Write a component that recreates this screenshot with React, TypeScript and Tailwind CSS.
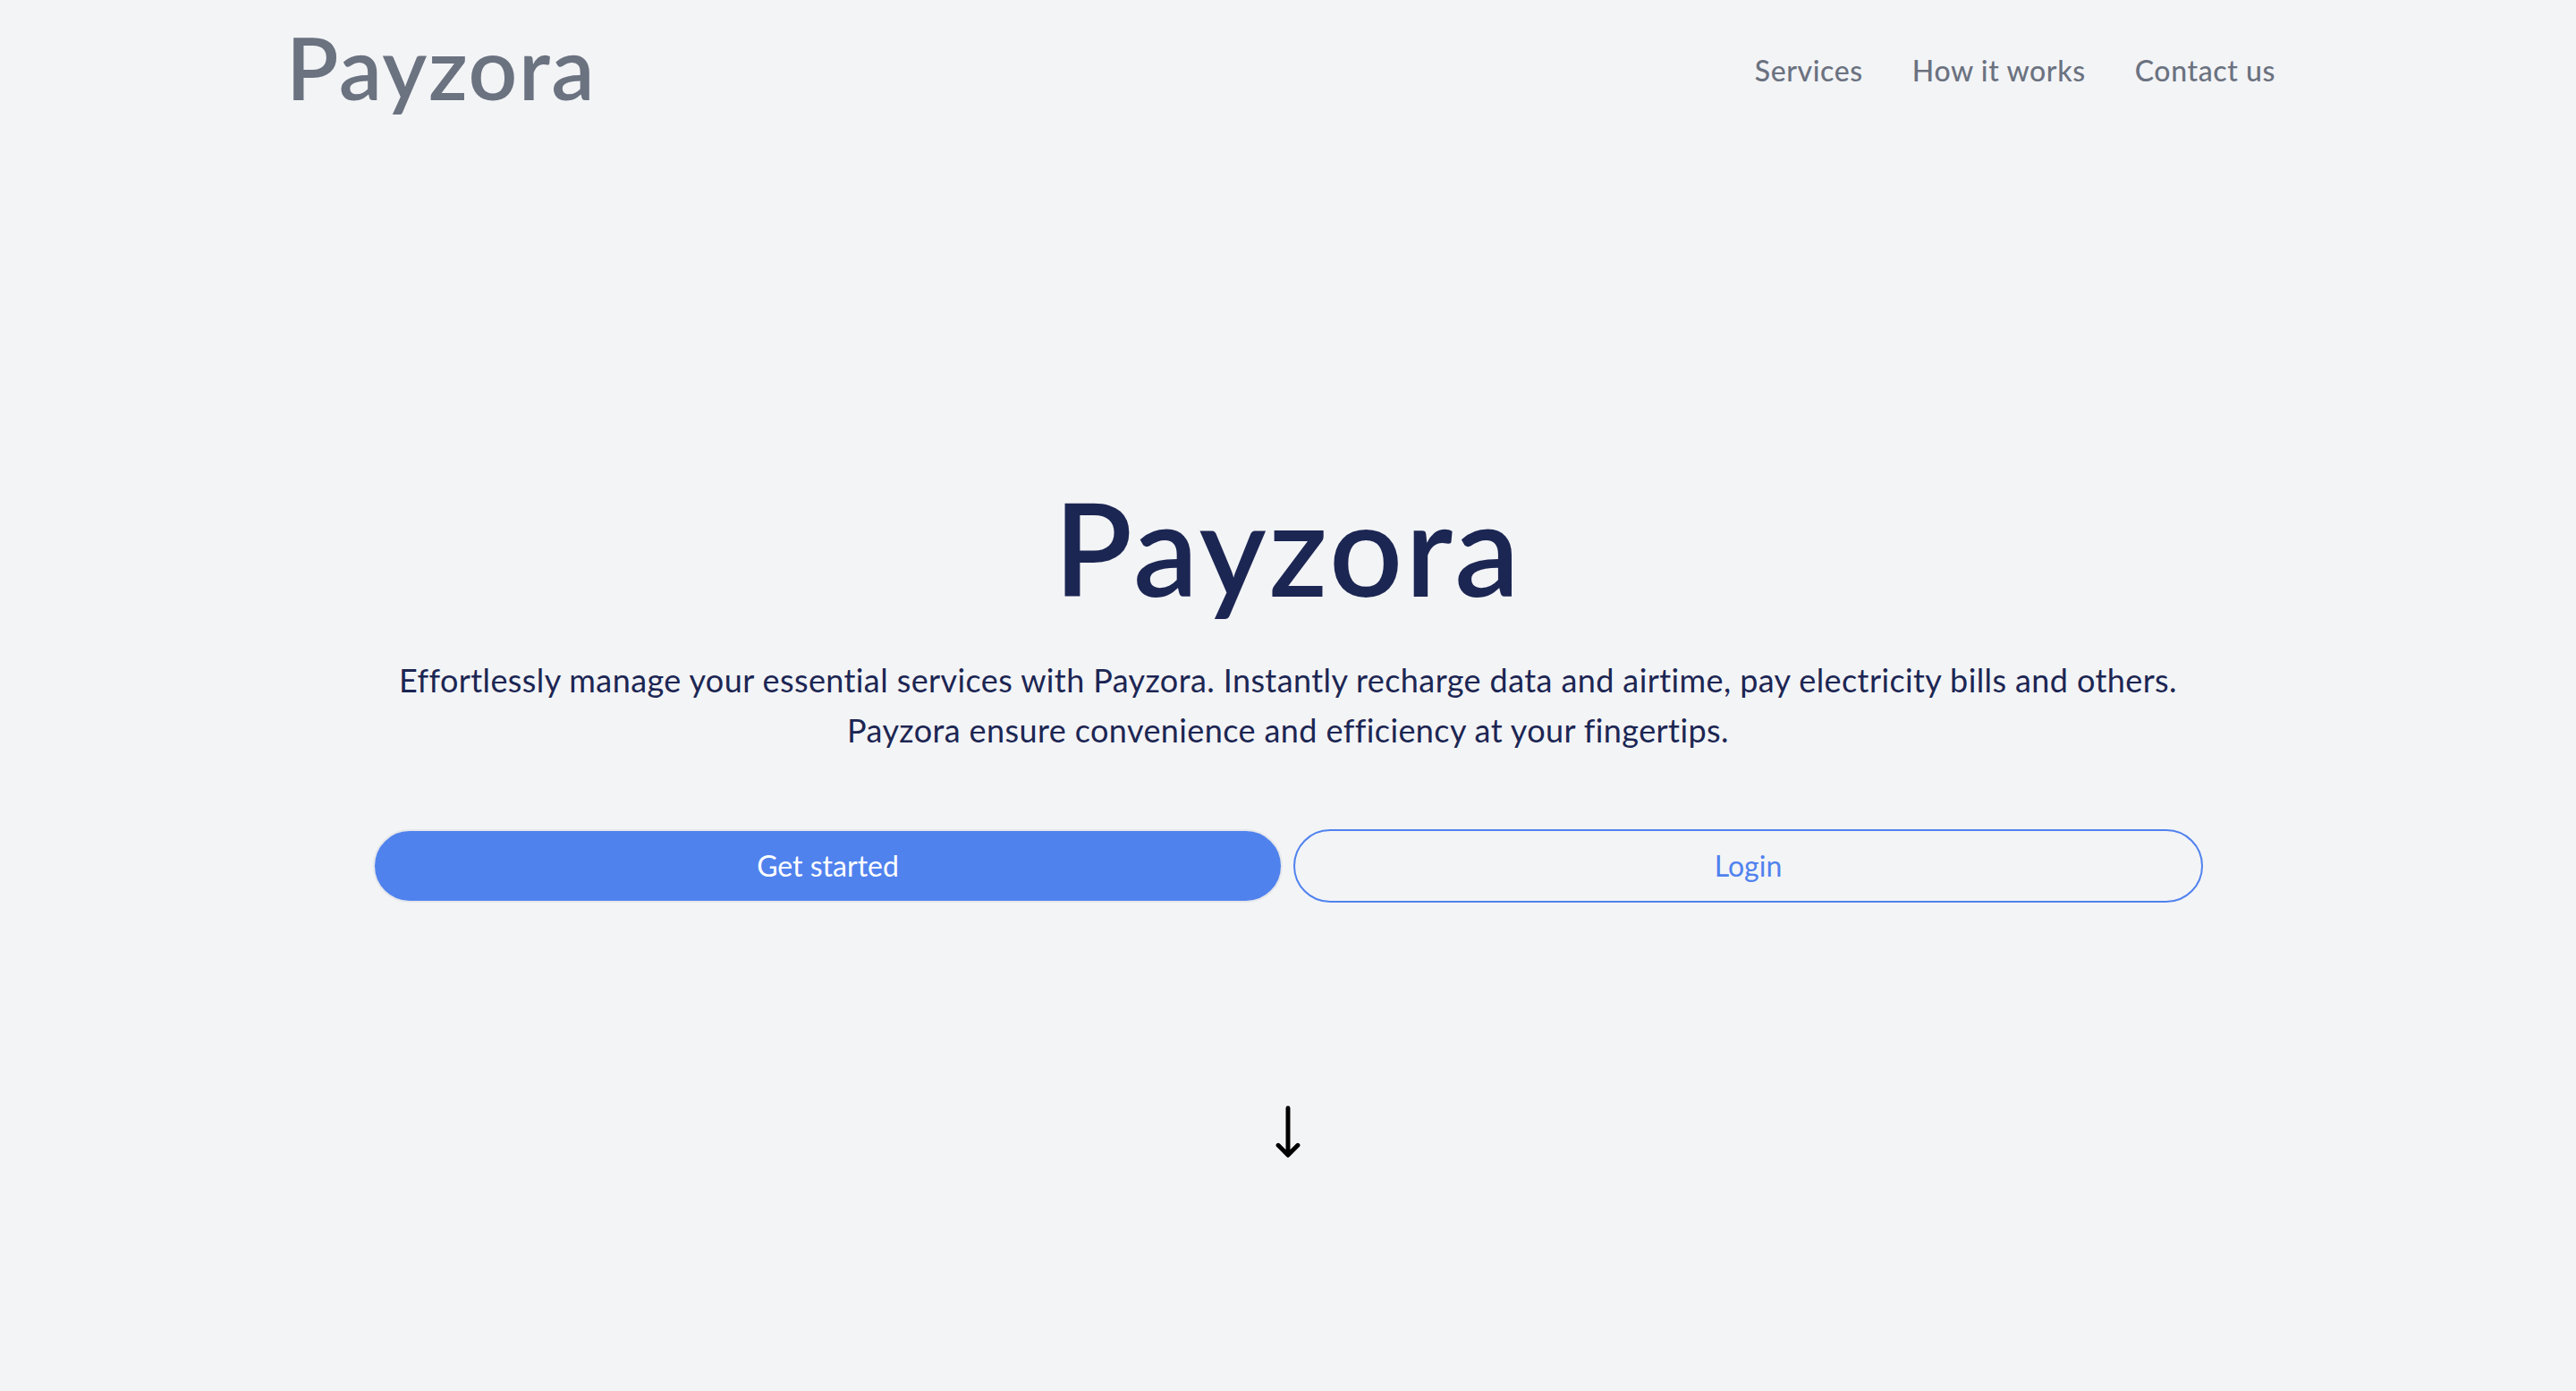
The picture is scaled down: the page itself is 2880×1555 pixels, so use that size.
export default function App() {
  return (
    <div className="min-h-screen bg-[#f3f4f6] font-['Lato','Liberation_Sans',sans-serif]">
      <header className="flex items-center justify-between pl-[320px] pr-[336px] pt-[27px]">
        <div className="text-[96px] leading-none font-semibold tracking-[1.6px] text-[#6b7280]">Payzora</div>
        <nav className="flex items-center gap-[55px] pt-[8px] text-[32px] font-medium tracking-[0.6px] text-[#6b7280]">
          <a href="#services">Services</a>
          <a href="#how">How it works</a>
          <a href="#contact">Contact us</a>
        </nav>
      </header>

      <main className="flex flex-col items-center">
        <h1 className="mt-[417px] text-[144px] leading-none font-semibold tracking-[3px] text-[#1c2653]">Payzora</h1>

        <p className="mt-[48px] text-center text-[36px] leading-[56px] tracking-[0.4px] text-[#1c2653]">
          Effortlessly manage your essential services with Payzora. Instantly recharge data and airtime, pay electricity bills and others.
          <br />
          Payzora ensure convenience and efficiency at your fingertips.
        </p>

        <div className="mt-[83px] flex w-[2046px] gap-[12px]">
          <button className="h-[82px] flex-1 rounded-full border-2 border-[#e5e7eb] bg-[#5082ee] text-[32px] text-white">
            Get started
          </button>
          <button className="h-[82px] flex-1 rounded-full border-2 border-[#5082ee] text-[32px] text-[#5082ee]">
            Login
          </button>
        </div>

        <svg
          className="mt-[221px] h-[70px] w-[70px] text-black"
          viewBox="0 0 24 24"
          fill="none"
          stroke="currentColor"
          strokeWidth={1.7}
          strokeLinecap="round"
          strokeLinejoin="round"
        >
          <path d="M15.75 17.25 12 21m0 0-3.75-3.75M12 21V3" />
        </svg>
      </main>
    </div>
  );
}
